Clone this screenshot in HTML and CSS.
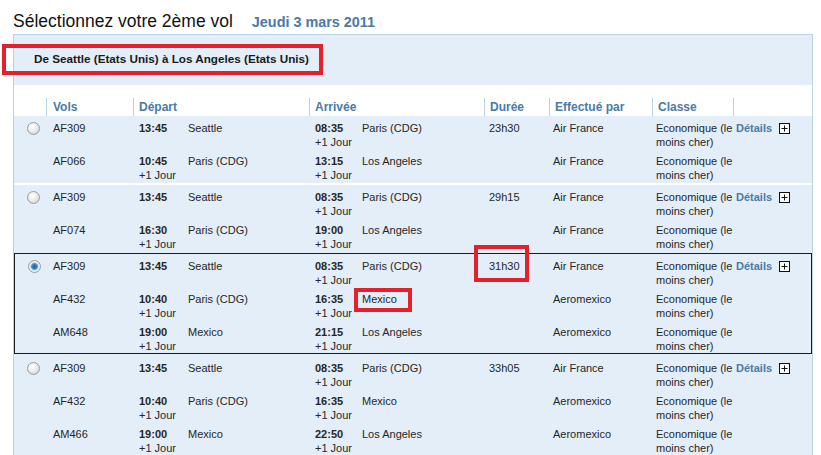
FILE: index.html
```html
<!DOCTYPE html>
<html lang="fr">
<head>
<meta charset="utf-8">
<title>Sélectionnez votre 2ème vol</title>
<link rel="stylesheet" href="styles.css">
</head>
<body>
<div class="title"><h1>Sélectionnez votre 2ème vol</h1><span class="date">Jeudi 3 mars 2011</span></div>
<div class="panel">
  <div class="route">De Seattle (Etats Unis) à Los Angeles (Etats Unis)</div>
  <div class="head">
    <div class="h h-vol">Vols</div>
    <div class="h h-dep">Départ</div>
    <div class="h h-arr">Arrivée</div>
    <div class="h h-dur">Durée</div>
    <div class="h h-air">Effectué par</div>
    <div class="h h-cls">Classe</div>
    <div class="h h-det"></div>
  </div>

  <div class="group">
    <div class="row">
      <div class="c-radio"><span class="radio"></span></div>
      <div class="c-vol">AF309</div>
      <div class="c-time"><b>13:45</b></div>
      <div class="c-city">Seattle</div>
      <div class="c-time"><b>08:35</b><br>+1 Jour</div>
      <div class="c-city">Paris (CDG)</div>
      <div class="c-dur">23h30</div>
      <div class="c-air">Air France</div>
      <div class="c-cls">Economique (le moins cher)</div>
      <div class="c-det"><span class="details">Détails</span><svg class="plus" width="11" height="11" viewBox="0 0 11 11"><rect x="0.5" y="0.5" width="10" height="10" fill="#fff" stroke="#111"/><path d="M5.5 2.5v6M2.5 5.5h6" stroke="#111"/></svg></div>
    </div>
    <div class="row">
      <div class="c-radio"></div>
      <div class="c-vol">AF066</div>
      <div class="c-time"><b>10:45</b><br>+1 Jour</div>
      <div class="c-city">Paris (CDG)</div>
      <div class="c-time"><b>13:15</b><br>+1 Jour</div>
      <div class="c-city">Los Angeles</div>
      <div class="c-dur"></div>
      <div class="c-air">Air France</div>
      <div class="c-cls">Economique (le moins cher)</div>
      <div class="c-det"></div>
    </div>
  </div>

  <div class="group sep">
    <div class="row">
      <div class="c-radio"><span class="radio"></span></div>
      <div class="c-vol">AF309</div>
      <div class="c-time"><b>13:45</b></div>
      <div class="c-city">Seattle</div>
      <div class="c-time"><b>08:35</b><br>+1 Jour</div>
      <div class="c-city">Paris (CDG)</div>
      <div class="c-dur">29h15</div>
      <div class="c-air">Air France</div>
      <div class="c-cls">Economique (le moins cher)</div>
      <div class="c-det"><span class="details">Détails</span><svg class="plus" width="11" height="11" viewBox="0 0 11 11"><rect x="0.5" y="0.5" width="10" height="10" fill="#fff" stroke="#111"/><path d="M5.5 2.5v6M2.5 5.5h6" stroke="#111"/></svg></div>
    </div>
    <div class="row">
      <div class="c-radio"></div>
      <div class="c-vol">AF074</div>
      <div class="c-time"><b>16:30</b><br>+1 Jour</div>
      <div class="c-city">Paris (CDG)</div>
      <div class="c-time"><b>19:00</b><br>+1 Jour</div>
      <div class="c-city">Los Angeles</div>
      <div class="c-dur"></div>
      <div class="c-air">Air France</div>
      <div class="c-cls">Economique (le moins cher)</div>
      <div class="c-det"></div>
    </div>
  </div>

  <div class="group selected">
    <div class="row">
      <div class="c-radio"><span class="radio checked"></span></div>
      <div class="c-vol">AF309</div>
      <div class="c-time"><b>13:45</b></div>
      <div class="c-city">Seattle</div>
      <div class="c-time"><b>08:35</b><br>+1 Jour</div>
      <div class="c-city">Paris (CDG)</div>
      <div class="c-dur">31h30</div>
      <div class="c-air">Air France</div>
      <div class="c-cls">Economique (le moins cher)</div>
      <div class="c-det"><span class="details">Détails</span><svg class="plus" width="11" height="11" viewBox="0 0 11 11"><rect x="0.5" y="0.5" width="10" height="10" fill="#fff" stroke="#111"/><path d="M5.5 2.5v6M2.5 5.5h6" stroke="#111"/></svg></div>
    </div>
    <div class="row">
      <div class="c-radio"></div>
      <div class="c-vol">AF432</div>
      <div class="c-time"><b>10:40</b><br>+1 Jour</div>
      <div class="c-city">Paris (CDG)</div>
      <div class="c-time"><b>16:35</b><br>+1 Jour</div>
      <div class="c-city">Mexico</div>
      <div class="c-dur"></div>
      <div class="c-air">Aeromexico</div>
      <div class="c-cls">Economique (le moins cher)</div>
      <div class="c-det"></div>
    </div>
    <div class="row">
      <div class="c-radio"></div>
      <div class="c-vol">AM648</div>
      <div class="c-time"><b>19:00</b><br>+1 Jour</div>
      <div class="c-city">Mexico</div>
      <div class="c-time"><b>21:15</b><br>+1 Jour</div>
      <div class="c-city">Los Angeles</div>
      <div class="c-dur"></div>
      <div class="c-air">Aeromexico</div>
      <div class="c-cls">Economique (le moins cher)</div>
      <div class="c-det"></div>
    </div>
  </div>

  <div class="group after">
    <div class="row">
      <div class="c-radio"><span class="radio"></span></div>
      <div class="c-vol">AF309</div>
      <div class="c-time"><b>13:45</b></div>
      <div class="c-city">Seattle</div>
      <div class="c-time"><b>08:35</b><br>+1 Jour</div>
      <div class="c-city">Paris (CDG)</div>
      <div class="c-dur">33h05</div>
      <div class="c-air">Air France</div>
      <div class="c-cls">Economique (le moins cher)</div>
      <div class="c-det"><span class="details">Détails</span><svg class="plus" width="11" height="11" viewBox="0 0 11 11"><rect x="0.5" y="0.5" width="10" height="10" fill="#fff" stroke="#111"/><path d="M5.5 2.5v6M2.5 5.5h6" stroke="#111"/></svg></div>
    </div>
    <div class="row">
      <div class="c-radio"></div>
      <div class="c-vol">AF432</div>
      <div class="c-time"><b>10:40</b><br>+1 Jour</div>
      <div class="c-city">Paris (CDG)</div>
      <div class="c-time"><b>16:35</b><br>+1 Jour</div>
      <div class="c-city">Mexico</div>
      <div class="c-dur"></div>
      <div class="c-air">Aeromexico</div>
      <div class="c-cls">Economique (le moins cher)</div>
      <div class="c-det"></div>
    </div>
    <div class="row">
      <div class="c-radio"></div>
      <div class="c-vol">AM466</div>
      <div class="c-time"><b>19:00</b><br>+1 Jour</div>
      <div class="c-city">Mexico</div>
      <div class="c-time"><b>22:50</b><br>+1 Jour</div>
      <div class="c-city">Los Angeles</div>
      <div class="c-dur"></div>
      <div class="c-air">Aeromexico</div>
      <div class="c-cls">Economique (le moins cher)</div>
      <div class="c-det"></div>
    </div>
  </div>
</div>

<div class="mark mark-route"></div>
<div class="mark mark-dur"></div>
<div class="mark mark-city"></div>
</body>
</html>
```

FILE: styles.css
```css
html, body {
  margin: 0;
  padding: 0;
  background: #fff;
}
body {
  position: relative;
  font-family: "Liberation Sans", Arial, sans-serif;
  color: #262626;
  width: 821px;
  height: 455px;
  overflow: hidden;
}
.title {
  height: 34px;
  box-sizing: border-box;
  padding: 11px 0 0 13px;
  display: flex;
  align-items: baseline;
  line-height: 20px;
}
.title h1 {
  margin: 0;
  font-size: 17.5px;
  font-weight: normal;
  color: #111;
}
.date {
  margin-left: 19px;
  font-size: 14.4px;
  font-weight: bold;
  color: #4a7aa6;
}
.panel {
  margin-left: 13px;
  width: 800px;
  box-sizing: border-box;
  border: 1px solid #b7d1e7;
  border-bottom: none;
  background: #e3eef9;
  height: 421px;
}
.route {
  height: 50px;
  box-sizing: border-box;
  padding: 17px 0 0 20px;
  font-size: 11.7px;
  line-height: 14px;
  font-weight: bold;
  color: #1a1a1a;
}
.head {
  background: #fff;
  height: 31px;
  box-sizing: border-box;
  padding-top: 13px;
  display: grid;
  grid-template-columns: 32px 87px 176px 175px 65px 103px 81px 79px;
}
.h {
  font-size: 12px;
  font-weight: bold;
  color: #4a7aa6;
  line-height: 18px;
  padding-left: 6px;
  border-left: 1px solid #b7d1e7;
  height: 18px;
}
.h-vol { grid-column: 2; }
.h-dep { padding-left: 5px; }
.h-arr { padding-left: 5px; }
.h-dur { padding-left: 5px; }
.h-air { padding-left: 5px; }
.h-cls { padding-left: 5px; }

.group.sep {
  margin-top: 1px;
  border-top: 2px solid #fff;
}
.group.selected {
  margin-top: 2px;
  border: 1px solid #1c1c1c;
}
.group.after {
  margin-top: 2px;
}
.row {
  display: grid;
  grid-template-columns: 32px 87px 49px 127px 47px 128px 65px 103px 82px 78px;
  height: 33px;
  box-sizing: border-box;
  padding-top: 5px;
  font-size: 11px;
  line-height: 14px;
}
.selected .row {
  grid-template-columns: 31px 87px 49px 127px 47px 128px 65px 103px 82px 77px;
}
.c-vol { padding-left: 7px; }
.c-time { padding-left: 6px; }
.c-time b { font-weight: bold; }
.c-city { padding-left: 6px; }
.c-dur { padding-left: 5px; }
.c-air { padding-left: 4px; }
.c-cls { padding-left: 4px; }
.c-det {
  padding-left: 2px;
  display: flex;
  align-items: flex-start;
  white-space: nowrap;
}
.details {
  font-weight: bold;
  color: #4a7aa6;
}
.plus {
  display: block;
  margin: 2px 0 0 7px;
}
.c-radio { position: relative; }
.radio {
  display: block;
  width: 13px;
  height: 13px;
  box-sizing: border-box;
  margin: 1px 0 0 13px;
  border-radius: 50%;
  border: 1px solid #9c9c9c;
  background: radial-gradient(circle at 40% 35%, #ffffff 0, #ececec 45%, #c9c9c9 100%);
}
.radio.checked {
  background: radial-gradient(circle at 50% 50%, #1e5f9e 0, #2f7fc4 2px, #5a9bd0 3px, #cfe0ee 4px, #f2f2f2 4.6px, #d2d2d2 100%);
}

.mark {
  position: absolute;
  border: 4px solid #e3202b;
  box-sizing: border-box;
}
.mark-route {
  left: 2px;
  top: 44px;
  width: 321px;
  height: 31px;
}
.mark-dur {
  left: 474px;
  top: 245px;
  width: 55px;
  height: 37px;
}
.mark-city {
  left: 354px;
  top: 288px;
  width: 58px;
  height: 24px;
}
```
